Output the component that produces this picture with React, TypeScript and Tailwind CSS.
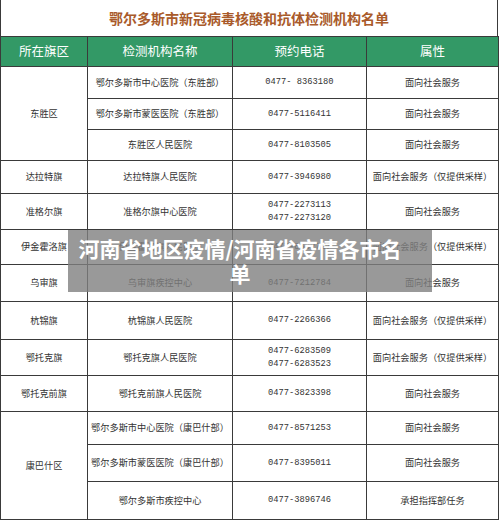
const cjk = '"Noto Sans CJK SC", "Noto Sans", sans-serif'
const mono = '"Liberation Mono", "Noto Sans CJK SC", monospace'

type Item = { name: string; phone: string[]; attr: string; h: number }
type Group = { district: string; items: Item[] }

const groups: Group[] = [
    {
        district: '东胜区',
        items: [
            { name: '鄂尔多斯市中心医院（东胜部）', phone: ['0477- 8363180'], attr: '面向社会服务', h: 32 },
            { name: '鄂尔多斯市蒙医医院（东胜部）', phone: ['0477-5116411'], attr: '面向社会服务', h: 31 },
            { name: '东胜区人民医院', phone: ['0477-8103505'], attr: '面向社会服务', h: 31 },
        ],
    },
    { district: '达拉特旗', items: [{ name: '达拉特旗人民医院', phone: ['0477-3946980'], attr: '面向社会服务（仅提供采样）', h: 33 }] },
    { district: '准格尔旗', items: [{ name: '准格尔旗中心医院', phone: ['0477-2273113', '0477-2273120'], attr: '面向社会服务', h: 36 }] },
    { district: '伊金霍洛旗', items: [{ name: '伊金霍洛旗人民医院', phone: ['0477-8632727'], attr: '面向社会服务（仅提供采样）', h: 35 }] },
    { district: '乌审旗', items: [{ name: '乌审旗疾控中心', phone: ['0477-7212784'], attr: '面向社会服务', h: 37 }] },
    { district: '杭锦旗', items: [{ name: '杭锦旗人民医院', phone: ['0477-2266366'], attr: '面向社会服务（仅提供采样）', h: 38 }] },
    { district: '鄂托克旗', items: [{ name: '鄂托克旗人民医院', phone: ['0477-6283509', '0477-6283523'], attr: '面向社会服务（仅提供采样）', h: 36 }] },
    { district: '鄂托克前旗', items: [{ name: '鄂托克前旗人民医院', phone: ['0477-3823398'], attr: '面向社会服务', h: 36 }] },
    {
        district: '康巴什区',
        items: [
            { name: '鄂尔多斯市中心医院（康巴什部）', phone: ['0477-8571253'], attr: '面向社会服务', h: 33 },
            { name: '鄂尔多斯市蒙医医院（康巴什部）', phone: ['0477-8395011'], attr: '面向社会服务', h: 37 },
            { name: '鄂尔多斯市疾控中心', phone: ['0477-3896746'], attr: '承担指挥部任务', h: 38 },
        ],
    },
]

const cell = 'border border-[#3a3a3a] text-center align-middle p-0 text-[#333]'

export default function App() {
    return <div className="relative w-[500px] h-[521px] bg-white overflow-hidden">
        <div className="w-[498px] h-[36px] border-x border-[#3a3a3a] flex items-center justify-center">
            <span className="text-[14px] font-bold text-[#a95a2a]" style={{ fontFamily: cjk }}>
                鄂尔多斯市新冠病毒核酸和抗体检测机构名单
            </span>
        </div>
        <table className="w-[498px] table-fixed border-collapse" style={{ fontFamily: cjk }}>
            <colgroup>
                <col className="w-[87px]" />
                <col className="w-[145px]" />
                <col className="w-[134px]" />
                <col className="w-[132px]" />
            </colgroup>
            <thead>
                <tr className="h-[30px] bg-[#339966] text-white text-[12.5px]">
                    <th className="border border-[#3a3a3a] font-normal">所在旗区</th>
                    <th className="border border-[#3a3a3a] font-normal">检测机构名称</th>
                    <th className="border border-[#3a3a3a] font-normal">预约电话</th>
                    <th className="border border-[#3a3a3a] font-normal">属性</th>
                </tr>
            </thead>
            <tbody className="text-[9.2px]">
                {groups.map(g => g.items.map((it, i) => <tr key={g.district + i} style={{ height: it.h }}>
                    {i === 0 && <td rowSpan={g.items.length} className={cell}>{g.district}</td>}
                    <td className={`${cell} whitespace-nowrap`}>{it.name}</td>
                    <td className={`${cell} text-[8.75px] leading-[13px]`} style={{ fontFamily: mono }}>
                        {it.phone.map(p => <div key={p} className="whitespace-pre">{p}</div>)}
                    </td>
                    <td className={`${cell} whitespace-nowrap`}>{it.attr}</td>
                </tr>))}
            </tbody>
        </table>

        <div className="absolute left-[68px] top-[230px] w-[364px] pl-[8px] pr-[28px] py-[6px] bg-[rgba(128,128,128,0.8)] text-center text-white text-[21px] font-bold leading-[25px]" style={{ fontFamily: cjk }}>
            河南省地区疫情/河南省疫情各市名单
        </div>
    </div>
}
